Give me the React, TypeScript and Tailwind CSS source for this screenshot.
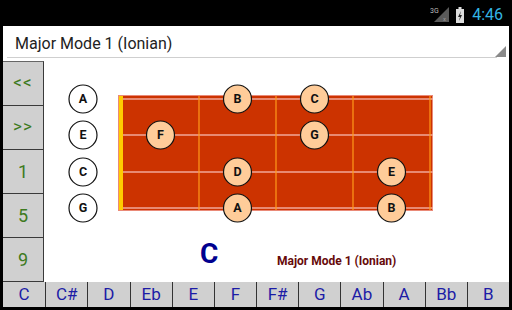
import React from "react";

const font = { fontFamily: "Roboto, 'Noto Sans', sans-serif" };

const strings = [99, 135, 172, 208];
const openNotes = ["A", "E", "C", "G"];
const frets = [199, 276, 353, 430];
const notes: { x: number; y: number; n: string }[] = [
  { x: 237.5, y: 99, n: "B" },
  { x: 314.5, y: 99, n: "C" },
  { x: 160.5, y: 135, n: "F" },
  { x: 314.5, y: 135, n: "G" },
  { x: 237.5, y: 172, n: "D" },
  { x: 391.5, y: 172, n: "E" },
  { x: 237.5, y: 208, n: "A" },
  { x: 391.5, y: 208, n: "B" },
];
const keys = ["C", "C#", "D", "Eb", "E", "F", "F#", "G", "Ab", "A", "Bb", "B"];
const side = ["<<", ">>", "1", "5", "9"];

function Fretboard() {
  return (
    <svg width={464} height={224} viewBox="44 58 464 224" className="block">
      {strings.map((y, i) => (
        <g key={"o" + i}>
          <circle cx={83} cy={y} r={14} fill="#fff" stroke="#111" strokeWidth={1.2} />
          <text x={83} y={y + 4.3} textAnchor="middle" fontSize={12.5} fontWeight={700} fill="#111" style={font}>
            {openNotes[i]}
          </text>
        </g>
      ))}
      <rect x={118.5} y={95.5} width={314} height={115} fill="#cc3300" stroke="#ea8a78" strokeWidth={1} />
      <rect x={119} y={96} width={4} height={114} fill="#ffcc00" />
      {strings.map((y) => (
        <line key={"s" + y} x1={123} x2={433} y1={y} y2={y} stroke="#f2a898" strokeWidth={1.5} />
      ))}
      {frets.map((x) => (
        <line key={"f" + x} x1={x} x2={x} y1={96} y2={210} stroke="#ff9a1a" strokeWidth={1.2} />
      ))}
      {notes.map((n, i) => (
        <g key={"n" + i}>
          <circle cx={n.x} cy={n.y} r={14} fill="#ffcc99" stroke="#111" strokeWidth={1.2} />
          <text x={n.x} y={n.y + 4.3} textAnchor="middle" fontSize={12.5} fontWeight={700} fill="#111" style={font}>
            {n.n}
          </text>
        </g>
      ))}
      <text x={200} y={263} fontSize={28} fontWeight={700} fill="#00008f" style={font}>
        C
      </text>
      <text x={277} y={265} fontSize={12} fontWeight={700} fill="#660a0a" style={font}>
        Major Mode 1 (Ionian)
      </text>
    </svg>
  );
}

export default function App() {
  return (
    <div className="w-[512px] h-[310px] bg-black flex flex-col overflow-hidden" style={font}>
      {/* status bar */}
      <div className="h-[26px] flex items-center justify-end pr-[9px] gap-[6px] pt-[4px]">
        <svg width={20} height={16} viewBox="0 0 20 16">
          <polygon points="19,0 19,15 4,15" fill="#5a5a5a" />
          <text x={0} y={6} fontSize={7} fill="#bbb" style={font}>3G</text>
          <text x={13} y={14} fontSize={6} fill="#999" style={font}>x</text>
        </svg>
        <svg width={8} height={16} viewBox="0 0 8 16">
          <rect x={2.5} y={0} width={3} height={2} fill="#ddd" />
          <rect x={0} y={2} width={8} height={14} fill="#ddd" />
          <polygon points="5,4 2,10 4,10 3,14 6,8 4,8" fill="#222" />
        </svg>
        <span className="text-[16px] leading-none text-[#33b5e5] ml-[2px]">4:46</span>
      </div>
      {/* body */}
      <div className="flex-1 flex flex-col bg-white mx-[3px] mb-[3px]">
        {/* spinner */}
        <div className="relative h-[32px] flex items-center pl-[12px] pt-[4px]">
          <span className="text-[16px] text-[#222]">Major Mode 1 (Ionian)</span>
          <div className="absolute left-[4px] right-[12px] bottom-0 h-px bg-[#cfcfcf]" />
          <svg className="absolute right-[3px] bottom-[1px]" width={11} height={11} viewBox="0 0 11 11">
            <polygon points="11,0 11,11 0,11" fill="#8a8a8a" />
          </svg>
        </div>
        {/* middle */}
        <div className="h-[224px] flex">
          <div className="w-[41px] flex flex-col pt-[3px]">
            {side.map((s, i) => (
              <div
                key={s}
                className={`flex-1 flex items-center justify-center bg-[#d0d0d0] border-r border-b border-[#3a3a3a] text-[#3d7a20] ${
                  i === 0 ? "border-t border-t-[#666]" : ""
                } ${i < 2 ? "text-[17px] tracking-[1px]" : "text-[18px]"}`}
              >
                {s}
              </div>
            ))}
          </div>
          <Fretboard />
        </div>
        {/* bottom keys */}
        <div className="flex-1 grid grid-cols-12">
          {keys.map((k, i) => (
            <div
              key={k}
              className={`flex items-center justify-center bg-[#d0d0d0] text-[17px] text-[#1c1ca6] ${
                i > 0 ? "border-l border-[#333]" : ""
              }`}
            >
              {k}
            </div>
          ))}
        </div>
      </div>
    </div>
  );
}
